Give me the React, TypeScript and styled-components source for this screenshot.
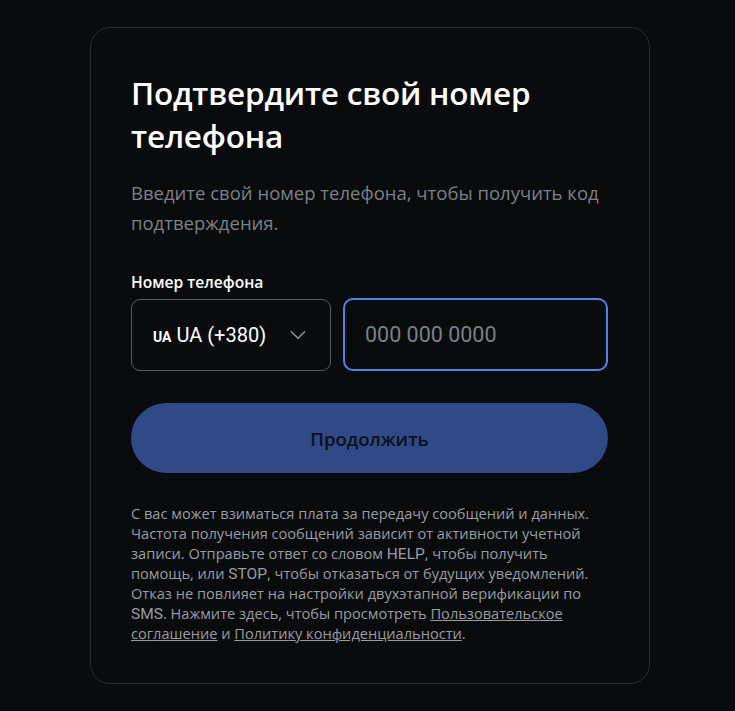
import styled, { createGlobalStyle } from "styled-components";

const GlobalStyle = createGlobalStyle`
  html, body {
    margin: 0;
    padding: 0;
    background: #0a0b0d;
  }
  body {
    font-family: "Open Sans", "Noto Sans", sans-serif;
    color: #e7e9ea;
  }
  * {
    box-sizing: border-box;
  }
`;

const Page = styled.div`
  min-height: 711px;
  display: flex;
  padding: 27px 0 0 90px;
`;

const Card = styled.div`
  width: 560px;
  height: 657px;
  border: 1px solid #2a2d31;
  border-radius: 20px;
  padding: 43px 41px 0 40px;
  display: flex;
  flex-direction: column;
`;

const Title = styled.h1`
  margin: 0;
  font-size: 31.5px;
  line-height: 43px;
  font-weight: 600;
  color: #ffffff;
  letter-spacing: -0.2px;
`;

const Subtitle = styled.p`
  margin: 21px 0 0;
  font-size: 18.5px;
  line-height: 30px;
  color: #7c8189;
`;

const Label = styled.div`
  margin-top: 34px;
  font-size: 15.6px;
  font-weight: 600;
  line-height: 20px;
  color: #ffffff;
`;

const Row = styled.div`
  margin-top: 6px;
  display: flex;
  align-items: center;
  gap: 12px;
`;

const Latin = styled.span`
  font-family: Roboto, "Liberation Sans", sans-serif;
  font-size: 15.5px;
  line-height: 1;
`;

const Select = styled.div`
  flex: 0 0 200px;
  height: 72px;
  border: 1px solid #55595f;
  border-radius: 9px;
  display: flex;
  align-items: center;
  padding: 0 0 0 21px;
  gap: 22px;
  color: #ffffff;
  font-size: 20px;
  white-space: nowrap;
`;

const CountryCode = styled.span`
  font-family: Roboto, "Liberation Sans", sans-serif;
  display: flex;
  align-items: baseline;
  gap: 5px;
`;

const Flag = styled.span`
  font-size: 14px;
  font-weight: 700;
`;

const PhoneInput = styled.input`
  flex: 1;
  min-width: 0;
  height: 73px;
  border: 2px solid #4b86e8;
  border-radius: 10px;
  background: transparent;
  padding: 0 20px;
  font-family: Roboto, "Liberation Sans", sans-serif;
  font-size: 21.5px;
  color: #ffffff;
  outline: none;
  &::placeholder {
    color: #7a8088;
  }
`;

const Button = styled.button`
  margin-top: 32px;
  height: 70px;
  width: 100%;
  border: none;
  border-radius: 35px;
  background: #2f4a86;
  color: #0d1117;
  font-family: "Open Sans", "Noto Sans", sans-serif;
  font-size: 18.5px;
  font-weight: 600;
  cursor: pointer;
`;

const Disclaimer = styled.p`
  margin: 30px 0 0;
  font-size: 14.6px;
  line-height: 20px;
  color: #989da4;
  a {
    color: inherit;
    text-decoration: underline;
  }
`;

const Chevron = () => (
  <svg width="20" height="20" viewBox="0 0 24 24" fill="none" stroke="#8b9096" strokeWidth="1.8" strokeLinecap="round" strokeLinejoin="round">
    <path d="M4 8l8 8 8-8" />
  </svg>
);

export default function App() {
  return (
    <>
      <GlobalStyle />
      <Page>
        <Card>
          <Title>Подтвердите свой номер телефона</Title>
          <Subtitle>Введите свой номер телефона, чтобы получить код подтверждения.</Subtitle>
          <Label>Номер телефона</Label>
          <Row>
            <Select>
              <CountryCode>
                <Flag>UA</Flag>
                UA (+380)
              </CountryCode>
              <Chevron />
            </Select>
            <PhoneInput placeholder="000 000 0000" />
          </Row>
          <Button>Продолжить</Button>
          <Disclaimer>
            С вас может взиматься плата за передачу сообщений и данных. Частота получения сообщений
            зависит от активности учетной записи. Отправьте ответ со словом <Latin>HELP</Latin>, чтобы
            получить помощь, или <Latin>STOP</Latin>, чтобы отказаться от будущих уведомлений. Отказ не
            повлияет на настройки двухэтапной верификации по <Latin>SMS</Latin>. Нажмите здесь, чтобы
            просмотреть <a href="#">Пользовательское соглашение</a> и{" "}
            <a href="#">Политику конфиденциальности</a>.
          </Disclaimer>
        </Card>
      </Page>
    </>
  );
}
